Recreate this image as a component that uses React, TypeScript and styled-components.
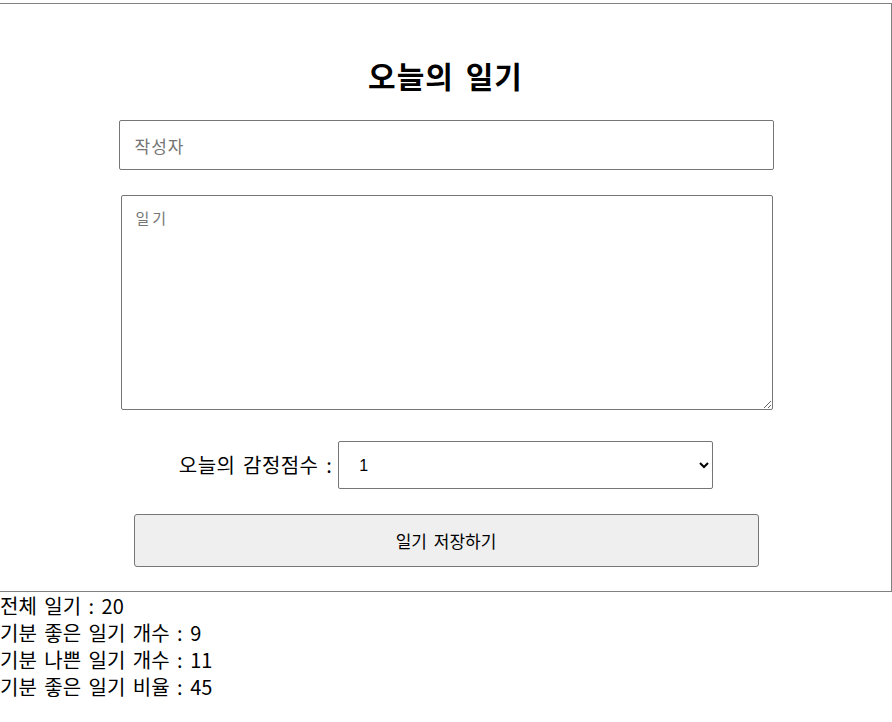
import React, { useState } from "react";
import styled, { createGlobalStyle } from "styled-components";

const GlobalStyle = createGlobalStyle`
  body {
    margin: 0;
    font-family: "Noto Sans CJK KR", "Noto Sans", sans-serif;
    color: #000;
    background: #fff;
  }
`;

const Editor = styled.div`
  margin-top: 3px;
  width: 892px;
  box-sizing: border-box;
  border: 1px solid #808080;
  border-left: none;
  display: flex;
  flex-direction: column;
  align-items: center;
  padding-bottom: 24px;
`;

const Title = styled.h2`
  margin: 51px 0 25px;
  font-size: 30px;
  line-height: 40px;
  font-weight: 700;
  letter-spacing: 1px;
  word-spacing: 4px;
`;

const AuthorInput = styled.input`
  box-sizing: border-box;
  width: 655px;
  height: 50px;
  padding: 0 15px;
  margin: 0 0 25px 1px;
  border: 1px solid #767676;
  border-radius: 2px;
  font-family: "Noto Sans CJK KR", sans-serif;
  font-size: 17px;
  letter-spacing: 1px;
  &::placeholder {
    color: #757575;
  }
`;

const ContentArea = styled.textarea`
  box-sizing: border-box;
  width: 652px;
  height: 215px;
  padding: 11px 14px;
  margin: 0 0 25px 2px;
  border: 1px solid #767676;
  border-radius: 2px;
  font-family: "DejaVu Sans Mono", "Noto Sans CJK KR", monospace;
  font-size: 15px;
  letter-spacing: 3px;
  &::placeholder {
    color: #757575;
  }
`;

const ScoreRow = styled.div`
  display: flex;
  align-items: center;
  gap: 6px;
  margin: 6px 0 25px 1px;
`;

const ScoreLabel = styled.span`
  font-size: 20px;
  line-height: 26px;
  word-spacing: 3px;
  letter-spacing: 0.4px;
`;

const ScoreSelect = styled.select`
  box-sizing: border-box;
  width: 375px;
  height: 48px;
  padding: 0 10px 0 16px;
  border: 1px solid #767676;
  border-radius: 2px;
  background: #fff;
  font-family: "Liberation Sans", sans-serif;
  font-size: 16px;
  color: #000;
`;

const SaveButton = styled.button`
  box-sizing: border-box;
  width: 625px;
  height: 53px;
  margin-left: 1px;
  border: 1px solid #767676;
  border-radius: 3px;
  background: #efefef;
  font-family: "Noto Sans CJK KR", sans-serif;
  font-size: 17px;
  word-spacing: 3px;
  color: #000;
`;

const Stats = styled.div`
  display: flex;
  flex-direction: column;
`;

const StatLine = styled.div`
  font-size: 20px;
  line-height: 27px;
  word-spacing: 3px;
`;

export default function App() {
  const [author, setAuthor] = useState("");
  const [content, setContent] = useState("");
  const [emotion, setEmotion] = useState(1);
  return (
    <>
      <GlobalStyle />
      <Editor>
        <Title>오늘의 일기</Title>
        <AuthorInput
          placeholder="작성자"
          value={author}
          onChange={(e) => setAuthor(e.target.value)}
        />
        <ContentArea
          placeholder="일기"
          value={content}
          onChange={(e) => setContent(e.target.value)}
        />
        <ScoreRow>
          <ScoreLabel>오늘의 감정점수 :</ScoreLabel>
          <ScoreSelect
            value={emotion}
            onChange={(e) => setEmotion(Number(e.target.value))}
          >
            {[1, 2, 3, 4, 5].map((n) => (
              <option key={n} value={n}>
                {n}
              </option>
            ))}
          </ScoreSelect>
        </ScoreRow>
        <SaveButton>일기 저장하기</SaveButton>
      </Editor>
      <Stats>
        <StatLine>전체 일기 : 20</StatLine>
        <StatLine>기분 좋은 일기 개수 : 9</StatLine>
        <StatLine>기분 나쁜 일기 개수 : 11</StatLine>
        <StatLine>기분 좋은 일기 비율 : 45</StatLine>
      </Stats>
    </>
  );
}
